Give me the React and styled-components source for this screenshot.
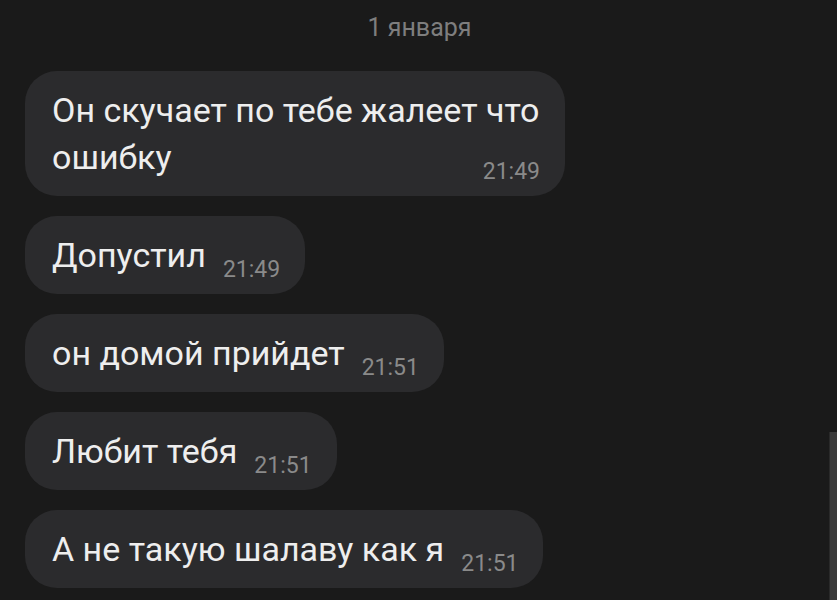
import styled, { createGlobalStyle } from "styled-components";

const messages = [
    { text: "Он скучает по тебе жалеет что ошибку", time: "21:49" },
    { text: "Допустил", time: "21:49" },
    { text: "он домой прийдет", time: "21:51" },
    { text: "Любит тебя", time: "21:51" },
    { text: "А не такую шалаву как я", time: "21:51" },
];

export default function App () {
    return (
        <>
            <GlobalStyle />
            <Page>
                <DateLabel>1 января</DateLabel>
                <List>
                    {messages.map((m, i) => (
                        <Bubble key={i}>
                            {m.text}
                            <Time>{m.time}</Time>
                        </Bubble>
                    ))}
                </List>
                <ScrollThumb />
            </Page>
        </>
    );
}

const GlobalStyle = createGlobalStyle`
    * {
        box-sizing: border-box;
    }
    body {
        margin: 0;
        background: #1a1a1a;
        font-family: Roboto, "Noto Sans", sans-serif;
    }
`;

const Page = styled.div`
    position: relative;
    width: 837px;
    height: 600px;
    overflow: hidden;
    background: #1a1a1a;
    padding: 0 25px;
`;

const DateLabel = styled.div`
    padding-top: 14px;
    text-align: center;
    font-size: 25px;
    line-height: 28px;
    color: #7e7e7e;
    margin-left: 2px;
`;

const List = styled.div`
    margin-top: 29px;
    display: flex;
    flex-direction: column;
    align-items: flex-start;
    gap: 20px;
`;

const Bubble = styled.div`
    display: flow-root;
    max-width: 540px;
    padding: 16px 25px 15px 27px;
    border-radius: 32px;
    background: #2b2b2d;
    color: #eeeeee;
    font-size: 34px;
    line-height: 47px;
`;

const Time = styled.span`
    float: right;
    margin: 27px 0 -2px 17px;
    font-size: 23px;
    line-height: 22px;
    color: #8a8a8a;
`;

const ScrollThumb = styled.div`
    position: absolute;
    right: 0;
    top: 432px;
    width: 8px;
    height: 168px;
    background: #3b3b3b;
    border-left: 1px solid #2a2a2a;
`;
